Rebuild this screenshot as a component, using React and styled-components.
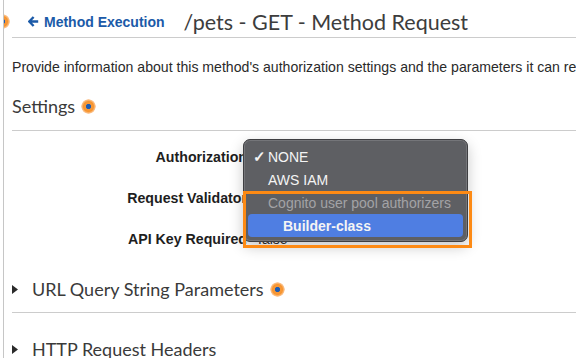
import React from "react";
import styled, { createGlobalStyle } from "styled-components";

const GlobalStyle = createGlobalStyle`
  body {
    margin: 0;
    background: #ffffff;
    font-family: "Liberation Sans", Arial, sans-serif;
    overflow: hidden;
  }
`;

const Page = styled.div`
  position: relative;
  margin-left: 3px;
  height: 358px;
  border-left: 1px solid #c6c6c6;
  overflow: hidden;
`;

const SideMark = styled.div`
  position: absolute;
  left: -4px;
  top: 100px;
  width: 3px;
  height: 36px;
  background: #e3eefa;
`;

const Content = styled.div`
  padding-left: 8px;
`;

const Header = styled.div`
  display: flex;
  align-items: center;
  height: 38px;
  box-sizing: border-box;
  padding: 6px 0 0 16px;
  border-bottom: 1px solid #cccccc;
  white-space: nowrap;
`;

const BackLink = styled.a`
  display: flex;
  align-items: center;
  gap: 5px;
  color: #1b5aa8;
  font-size: 14px;
  font-weight: bold;
  text-decoration: none;
  margin-right: 19px;
`;

const Title = styled.h1`
  margin: 0;
  font-family: Lato, sans-serif;
  font-size: 21.5px;
  font-weight: 400;
  color: #3d3d3d;
`;

const Description = styled.p`
  margin: 0;
  padding-top: 20px;
  font-size: 14.1px;
  line-height: 18px;
  color: #2a2a2a;
  white-space: nowrap;
`;

const SectionHead = styled.h2`
  display: flex;
  align-items: center;
  gap: ${(p) => (p.$collapsible ? "14px" : "0")};
  margin: ${(p) => p.$top}px 0 0;
  padding-bottom: ${(p) => p.$bottom}px;
  line-height: 24px;
  font-family: Lato, sans-serif;
  font-size: 18px;
  font-weight: 400;
  color: #3a3a3a;
  border-bottom: ${(p) => (p.$rule ? "1px solid #cccccc" : "none")};
  white-space: nowrap;
`;

const Hotspot = styled.span`
  display: inline-block;
  flex: none;
  width: 15px;
  height: 15px;
  margin-left: ${(p) => p.$gap || 6}px;
  border-radius: 50%;
  background: radial-gradient(
    circle,
    #1c5cb3 0 2.2px,
    #f6983a 3px,
    #f7952f 5px,
    rgba(248, 160, 80, 0.55) 7px,
    rgba(248, 160, 80, 0) 7.5px
  );
`;

const CornerHotspot = styled(Hotspot)`
  position: absolute;
  left: -10px;
  top: 13px;
  margin: 0;
  width: 17px;
  height: 17px;
`;

const Form = styled.div`
  position: relative;
  padding-top: 5px;
`;

const Row = styled.div`
  display: grid;
  grid-template-columns: 235px 1fr;
  column-gap: 11px;
  align-items: center;
  height: 41px;
`;

const Label = styled.div`
  text-align: right;
  font-size: 14.2px;
  font-weight: bold;
  color: #1e1e1e;
  white-space: nowrap;
`;

const Value = styled.div`
  display: flex;
  align-items: center;
  gap: 6px;
  font-size: 14px;
  color: #333;
`;

const Menu = styled.div`
  position: absolute;
  left: 231px;
  top: 8px;
  width: 225px;
  height: 103px;
  box-sizing: border-box;
  padding: 5px 4px 6px;
  background: #5e5f63;
  border: 1px solid #3f3f42;
  border-radius: 7px;
  box-shadow: inset 0 0 0 1px rgba(255, 255, 255, 0.14),
    0 5px 14px rgba(0, 0, 0, 0.22);
  font-size: 14px;
`;

const MenuItem = styled.div`
  display: flex;
  align-items: center;
  height: 23px;
  box-sizing: border-box;
  padding-left: ${(p) => (p.$indent ? 35 : 20)}px;
  border-radius: 4px;
  color: ${(p) => (p.$muted ? "#a3a3a6" : "#f4f4f4")};
  background: ${(p) => (p.$active ? "#4f7ee2" : "transparent")};
  font-weight: ${(p) => (p.$active ? "bold" : "normal")};
  white-space: nowrap;
  position: relative;
`;

const Check = styled.span`
  position: absolute;
  left: 5px;
  font-size: 15px;
  font-weight: bold;
  color: #f4f4f4;
`;

const Highlight = styled.div`
  position: absolute;
  left: 231px;
  top: 60px;
  width: 229px;
  height: 57px;
  box-sizing: border-box;
  border: 3.5px solid #fd8a14;
  pointer-events: none;
`;

const Caret = () => (
  <svg width="6" height="9" viewBox="0 0 6 9">
    <path d="M0 0 L6 4.5 L0 9 Z" fill="#2b2b2b" />
  </svg>
);

const ArrowLeft = () => (
  <svg width="11" height="11" viewBox="0 0 11 11">
    <path
      d="M5.6 1 L1.2 5.5 L5.6 10 M1.6 5.5 H10.2"
      fill="none"
      stroke="#1b5aa8"
      strokeWidth="2.4"
      strokeLinejoin="round"
    />
  </svg>
);

export default function App() {
  return (
    <>
      <GlobalStyle />
      <Page>
        <SideMark />
        <CornerHotspot />
        <Content>
          <Header>
            <BackLink href="#">
              <ArrowLeft />
              Method Execution
            </BackLink>
            <Title>/pets - GET - Method Request</Title>
          </Header>

          <Description>
            Provide information about this method's authorization settings and
            the parameters it can receive.
          </Description>

          <SectionHead $top={18} $bottom={12} $rule>
            Settings
            <Hotspot $gap={6} />
          </SectionHead>

          <Form>
            <Row>
              <Label>Authorization</Label>
              <Value>NONE</Value>
            </Row>
            <Row>
              <Label>Request Validator</Label>
              <Value>NONE</Value>
            </Row>
            <Row>
              <Label>API Key Required</Label>
              <Value>false</Value>
            </Row>

            <Menu>
              <MenuItem>
                <Check>✓</Check>NONE
              </MenuItem>
              <MenuItem>AWS IAM</MenuItem>
              <MenuItem $muted>Cognito user pool authorizers</MenuItem>
              <MenuItem $active $indent>
                Builder-class
              </MenuItem>
            </Menu>
            <Highlight />
          </Form>

          <SectionHead $top={18} $bottom={11} $rule $collapsible>
            <Caret />
            <span>URL Query String Parameters</span>
            <Hotspot $gap={-8} />
          </SectionHead>

          <SectionHead $top={24} $bottom={0} $collapsible>
            <Caret />
            <span>HTTP Request Headers</span>
          </SectionHead>
        </Content>
      </Page>
    </>
  );
}
